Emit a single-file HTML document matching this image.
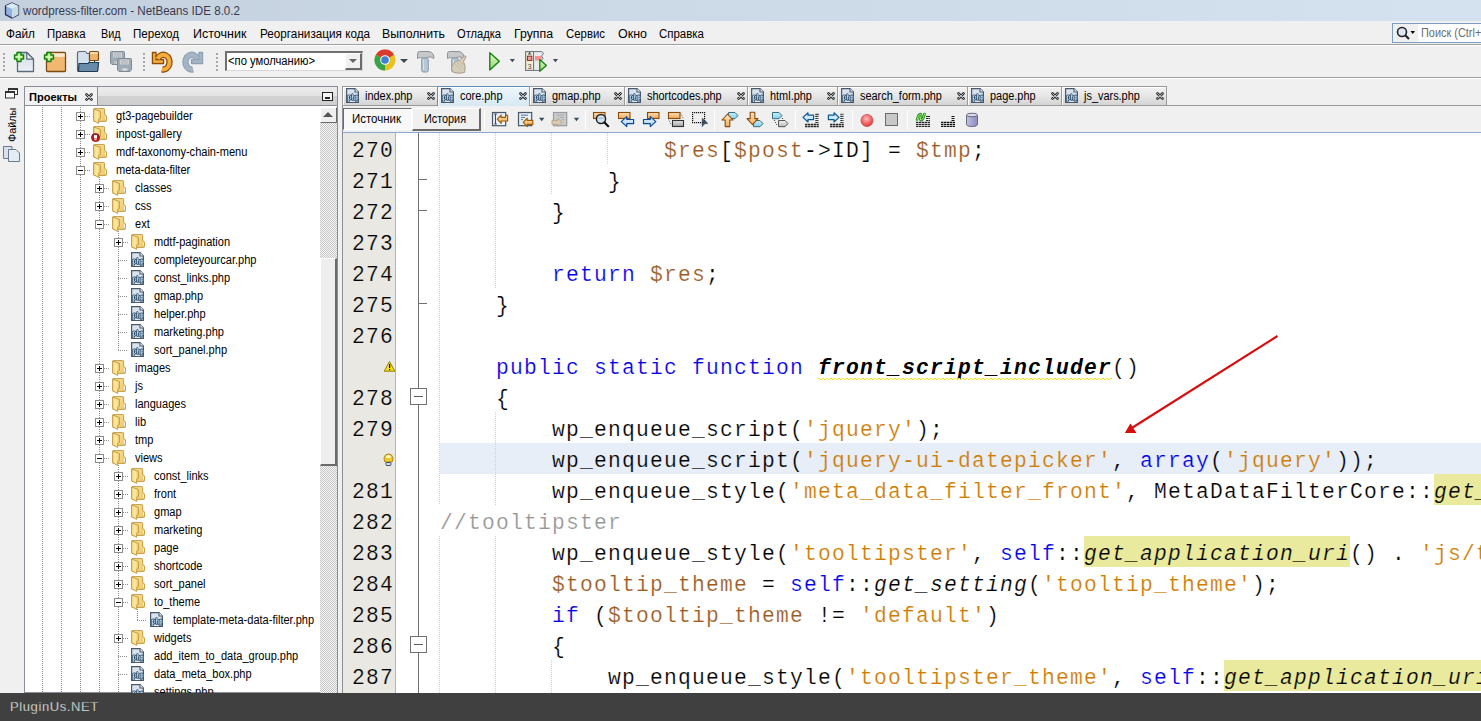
<!DOCTYPE html><html><head><meta charset="utf-8"><style>
*{margin:0;padding:0;box-sizing:border-box}
html,body{width:1481px;height:721px;overflow:hidden;background:#f0f0f0;font-family:"Liberation Sans",sans-serif;font-size:12px;color:#000;position:relative}
.a{position:absolute}
.t{position:absolute;white-space:pre;line-height:1;transform-origin:0 0}
svg{position:absolute;overflow:visible}
#title{left:0;top:0;width:1481px;height:21px;background:linear-gradient(90deg,#c4d0de 0%,#cbd8e6 40%,#d4e2f0 100%)}
.hl{position:absolute;left:0;width:1481px;height:1px}
.code{position:absolute;left:440px;font-family:"Liberation Mono",monospace;font-size:21.3px;letter-spacing:1.218px;white-space:pre;line-height:31px;height:31px;padding-top:3px;color:#000;-webkit-text-stroke:0.2px #fff}
.ln{position:absolute;left:345px;width:49px;text-align:right;font-family:"Liberation Mono",monospace;font-size:21.3px;letter-spacing:1.218px;white-space:pre;line-height:31px;height:31px;padding-top:3px;color:#000;-webkit-text-stroke:0.2px #e9e8e2}
.kw{color:#0000e6}
.var{color:#9a5a22}
.str{color:#ce7b00}
.cm{color:#969696}
.it{font-style:italic}
.bi{font-style:italic;font-weight:bold;-webkit-text-stroke-width:0}
.yel{-webkit-text-stroke-color:#eaea9e}
.hlc{-webkit-text-stroke-color:#e8eef8}
.vg{position:absolute;width:1px;background:repeating-linear-gradient(180deg,#8c8c8c 0 1px,transparent 1px 2px)}
.hg{position:absolute;height:1px;background:repeating-linear-gradient(90deg,#8c8c8c 0 1px,transparent 1px 2px)}
.ig{position:absolute;width:1px;background:repeating-linear-gradient(180deg,#d0d0d0 0 1px,transparent 1px 2px)}
.exp{position:absolute;width:9px;height:9px;border:1px solid #8c8c8c;background:#fff}
.exp:before{content:"";position:absolute;left:1px;top:3px;width:5px;height:1px;background:#000}
.exp.p:after{content:"";position:absolute;left:3px;top:1px;width:1px;height:5px;background:#000}
.tab{position:absolute;top:86px;height:19px;border:1px solid #9a9a9a;border-bottom:none;box-shadow:inset 1px 1px 0 #fff;background:linear-gradient(180deg,#f2f2f2 0%,#e6e6e6 50%,#d4d4d4 100%)}
.tab.act{height:20px;background:linear-gradient(180deg,#eef6fc 0%,#d8e8f4 100%);border-color:#5a8ec4}
.sep{position:absolute;width:1px;background:#a0a0a0;border-right:1px solid #fff}
.dsep{position:absolute;width:2px;background:repeating-linear-gradient(180deg,#a8a8a8 0 2px,transparent 2px 4px)}
.dd{position:absolute;width:0;height:0;border-left:4px solid transparent;border-right:4px solid transparent;border-top:4px solid #3a4a5a}
</style></head><body>
<svg width="0" height="0" style="position:absolute"><defs>
<symbol id="fold" viewBox="0 0 14 16"><defs><linearGradient id="gfb" x1="0" y1="0" x2="1" y2="1"><stop offset="0" stop-color="#f8e3a0"/><stop offset="1" stop-color="#eec868"/></linearGradient><linearGradient id="gff" x1="0" y1="0" x2="1" y2="0"><stop offset="0" stop-color="#f6d880"/><stop offset="0.5" stop-color="#fce9a4"/><stop offset="1" stop-color="#f0cc6c"/></linearGradient></defs><path d="M1 0.6 L10.9 0.6 Q11.6 0.6 11.6 1.3 L11.6 6.4 L12.9 7.3 Q13.6 7.9 13.6 8.8 L13.6 12.6 Q13.6 13.4 12.8 13.4 L1 13.4 Z" fill="url(#gfb)" stroke="#c49c46" stroke-width="1"/><path d="M0.6 1 L7.4 3.4 L7.4 10.4 L5.7 11.2 L5.7 15.4 L0.6 12.8 Z" fill="url(#gff)" stroke="#c49c46" stroke-width="1" stroke-linejoin="round"/><rect x="12" y="8.6" width="0.9" height="3.4" fill="#fff"/><rect x="12" y="11.6" width="0.9" height="0.9" fill="#9ac0f0"/></symbol>
<symbol id="php" viewBox="0 0 13 15"><path d="M0.6 0.6 L9 0.6 L12.4 4 L12.4 14.4 L0.6 14.4 Z" fill="#d8e3ee" stroke="#4a5a6c" stroke-width="1.2"/><path d="M9 0.6 L9 4 L12.4 4" fill="#f2f6fa" stroke="#4a5a6c" stroke-width="1.1"/><path d="M2.4 13.6 L2.4 7.8 M2.4 8.8 Q2.6 7.6 3.6 7.6 Q4.7 7.6 4.7 9.6 Q4.7 11.5 3.6 11.5 Q2.6 11.5 2.4 10.6 M6.4 6.4 L6.4 11.8 M6.4 9 Q6.6 7.8 7.4 7.8 Q8.3 7.8 8.3 9 L8.3 11.8 M10.1 13.6 L10.1 7.8 M10.1 8.8 Q10.3 7.6 11 7.6 Q11.9 7.6 11.9 9.6 Q11.9 11.5 11 11.5 Q10.3 11.5 10.1 10.6" fill="none" stroke="#2e4c68" stroke-width="2.3" stroke-linecap="round"/><path d="M2.4 13.6 L2.4 7.8 M2.4 8.8 Q2.6 7.6 3.6 7.6 Q4.7 7.6 4.7 9.6 Q4.7 11.5 3.6 11.5 Q2.6 11.5 2.4 10.6 M6.4 6.4 L6.4 11.8 M6.4 9 Q6.6 7.8 7.4 7.8 Q8.3 7.8 8.3 9 L8.3 11.8 M10.1 13.6 L10.1 7.8 M10.1 8.8 Q10.3 7.6 11 7.6 Q11.9 7.6 11.9 9.6 Q11.9 11.5 11 11.5 Q10.3 11.5 10.1 10.6" fill="none" stroke="#c8e4fa" stroke-width="0.8" stroke-linecap="round"/><path d="M4 13.5 L9 13.5" stroke="#f4f8fc" stroke-width="0.7"/></symbol>
</defs></svg>
<div class="a" id="title"></div>
<svg style="left:4px;top:2px" width="16" height="17" viewBox="0 0 16 17"><path d="M8 1 L14.5 4 L14.5 12.5 L8 16 L1.5 12.5 L1.5 4 Z" fill="#8fb0e0" stroke="#2a2a5a" stroke-width="1.3"/><path d="M1.5 4 L8 7 L14.5 4 L8 1 Z" fill="#d8ecf0"/><path d="M8 7 L14.5 4 L14.5 12.5 L8 16Z" fill="#c8dce0"/></svg>
<div class="t" style="left:23px;top:4px;font-size:13px;color:#3a3a4e;transform:scaleX(0.894)">wordpress-filter.com - NetBeans IDE 8.0.2</div>
<div class="t" style="transform:scaleX(0.9436);left:6px;top:28px;font-size:12.5px">Файл</div>
<div class="t" style="transform:scaleX(0.9116);left:47px;top:28px;font-size:12.5px">Правка</div>
<div class="t" style="transform:scaleX(0.8619);left:100.5px;top:28px;font-size:12.5px">Вид</div>
<div class="t" style="transform:scaleX(0.9264);left:133px;top:28px;font-size:12.5px">Переход</div>
<div class="t" style="transform:scaleX(1.0023);left:192.5px;top:28px;font-size:12.5px">Источник</div>
<div class="t" style="transform:scaleX(0.9372);left:259.5px;top:28px;font-size:12.5px">Реорганизация кода</div>
<div class="t" style="transform:scaleX(0.9815);left:382px;top:28px;font-size:12.5px">Выполнить</div>
<div class="t" style="transform:scaleX(0.8903);left:457px;top:28px;font-size:12.5px">Отладка</div>
<div class="t" style="transform:scaleX(0.9842);left:514px;top:28px;font-size:12.5px">Группа</div>
<div class="t" style="transform:scaleX(0.9109);left:566px;top:28px;font-size:12.5px">Сервис</div>
<div class="t" style="transform:scaleX(0.9984);left:618px;top:28px;font-size:12.5px">Окно</div>
<div class="t" style="transform:scaleX(0.9175);left:659px;top:28px;font-size:12.5px">Справка</div>
<div class="hl" style="top:44px;background:#a0a0a0"></div><div class="hl" style="top:45px;background:#fff"></div>
<div class="hl" style="top:77px;background:#a0a0a0"></div><div class="hl" style="top:78px;background:#fff"></div>
<div class="a" style="left:1392px;top:23px;width:95px;height:20px;border:1px solid #7b9ec2;background:#fff"></div>
<div class="a" style="left:1393px;top:24px;width:25px;height:18px;background:#f0f0f0"></div>
<svg style="left:1396px;top:26px" width="20" height="16"><circle cx="6" cy="6" r="4.5" fill="#dbe8f4" stroke="#222" stroke-width="1.6"/><path d="M9 9 L13 13" stroke="#222" stroke-width="2.2"/><path d="M14.5 5 L19 5 L16.75 8 Z" fill="#000"/></svg>
<div class="t" style="left:1421px;top:27px;font-size:12px;color:#6d6d6d;transform:scaleX(0.91)">Поиск (Ctrl+I)</div>
<div class="dsep" style="left:3px;top:53px;height:20px"></div>
<div class="dsep" style="left:143px;top:53px;height:20px"></div>
<div class="dsep" style="left:216px;top:53px;height:20px"></div>
<svg style="left:10px;top:48px" width="26" height="26"><defs><linearGradient id="gpg" x1="0" y1="0" x2="0" y2="1"><stop offset="0" stop-color="#cfd9e6"/><stop offset="1" stop-color="#eef2f8"/></linearGradient></defs><path d="M7.5 4.5 L16.8 4.5 L23.5 11.2 L23.5 23.5 L7.5 23.5 Z" fill="url(#gpg)" stroke="#5c6a7a" stroke-width="1.3" stroke-linejoin="round"/><path d="M16.8 4.5 L16.8 11.2 L23.5 11.2Z" fill="#e6ecf4" stroke="#5c6a7a" stroke-width="1.2" stroke-linejoin="round"/><path d="M7 4.5 L11 4.5 L11 7 L13.5 7 L13.5 11 L11 11 L11 13.5 L7 13.5 L7 11 L4.5 11 L4.5 7 L7 7 Z" fill="#a8ee78" stroke="#168010" stroke-width="1.4" stroke-linejoin="round"/><path d="M8.5 6 L9.5 6 L9.5 12 L8.5 12Z M6 8.5 L12 8.5 L12 9.5 L6 9.5Z" fill="#e4ffd0"/></svg>
<svg style="left:40px;top:48px" width="26" height="26"><rect x="6.5" y="4.5" width="19" height="19" rx="1" fill="#f0b870" stroke="#7a4a12" stroke-width="1.3"/><rect x="7.3" y="5.3" width="17.4" height="3.6" fill="#fbe8cc"/><path d="M7 4.5 L11 4.5 L11 7 L13.5 7 L13.5 11 L11 11 L11 13.5 L7 13.5 L7 11 L4.5 11 L4.5 7 L7 7 Z" fill="#a8ee78" stroke="#168010" stroke-width="1.4" stroke-linejoin="round"/><path d="M8.5 6 L9.5 6 L9.5 12 L8.5 12Z M6 8.5 L12 8.5 L12 9.5 L6 9.5Z" fill="#e4ffd0"/></svg>
<svg style="left:72px;top:48px" width="28" height="26"><path d="M5.5 5.5 Q5.5 3.5 7.5 3.5 L13 3.5 Q14.5 3.5 14.8 5.5 L17.5 5.5 L17.5 22.5 Q17.5 23.5 16.5 23.5 L6.5 23.5 Q5.5 23.5 5.5 22.5Z" fill="#d4e0ec" stroke="#5c6a7a" stroke-width="1.2"/><rect x="17.5" y="3.5" width="9" height="9" rx="1" fill="#eeb268" stroke="#7a4a12" stroke-width="1.2"/><rect x="18.2" y="4.2" width="7.6" height="1.8" fill="#fbe2c0"/><path d="M22.5 12.5 L22.5 14.5" stroke="#333"/><path d="M7 15.5 L16 15.5 L17 14.5 L26.5 14.5 L25.8 22.5 Q25.7 23.5 24.7 23.5 L7 23.5 Q6.5 23.5 6.5 22.5Z" fill="#6a8cac" stroke="#243a50" stroke-width="1.2"/></svg>
<svg style="left:106px;top:48px" width="28" height="26"><path d="M4.5 4.5 Q4.5 3.5 5.5 3.5 L17.5 3.5 Q18.5 3.5 18.5 4.5 L18.5 14.5 L17 16.5 L6 16.5 L4.5 15Z" fill="#9eaab6" stroke="#7e8a96" stroke-width="1"/><rect x="7" y="4.5" width="9" height="5" fill="#cdd0d4"/><path d="M8 6 L15 6 M8 8 L15 8" stroke="#a8abb0" stroke-width="0.8"/><rect x="8" y="13" width="7" height="3" fill="#b8bcc0"/><rect x="10" y="13.5" width="3.5" height="2" fill="#e0e0e0"/><path d="M11.5 11.5 Q11.5 10.5 12.5 10.5 L24.5 10.5 Q25.5 10.5 25.5 11.5 L25.5 21.5 L24 23.5 L13 23.5 L11.5 22Z" fill="#9eaab6" stroke="#7e8a96" stroke-width="1"/><rect x="14" y="11.5" width="9" height="5" fill="#cdd0d4"/><path d="M15 13 L22 13 M15 15 L22 15" stroke="#a8abb0" stroke-width="0.8"/><rect x="15" y="20" width="7" height="3" fill="#b8bcc0"/><rect x="17" y="20.5" width="3.5" height="2" fill="#e0e0e0"/></svg>
<svg style="left:148px;top:48px" width="26" height="26"><path d="M9.6 10.9 A6.3 7.3 0 1 1 14 21.3" fill="none" stroke="#8a4a08" stroke-width="6.4"/><path d="M4.5 4.5 L8 4.5 L8 11.8 L15.5 11.8 L15.5 15.5 L4.5 15.5 Z" fill="#f2a838" stroke="#8a4a08" stroke-width="1.4" stroke-linejoin="round"/><path d="M9.6 10.9 A6.3 7.3 0 1 1 14 21.3" fill="none" stroke="#f4ac3c" stroke-width="4"/><path d="M5.3 5.2 L7.3 5.2 L7.3 12.5 L14.8 12.5 L14.8 14.8 L5.3 14.8Z" fill="#f2a838"/></svg>
<svg style="left:181px;top:48px" width="26" height="26"><g transform="translate(26,0) scale(-1,1)"><path d="M9.6 10.9 A6.3 7.3 0 1 1 14 21.3" fill="none" stroke="#8ea0b2" stroke-width="6.4"/><path d="M4.5 4.5 L8 4.5 L8 11.8 L15.5 11.8 L15.5 15.5 L4.5 15.5 Z" fill="#a4b6c6" stroke="#8ea0b2" stroke-width="1.4" stroke-linejoin="round"/><path d="M9.6 10.9 A6.3 7.3 0 1 1 14 21.3" fill="none" stroke="#a4b6c6" stroke-width="4"/><path d="M5.3 5.2 L7.3 5.2 L7.3 12.5 L14.8 12.5 L14.8 14.8 L5.3 14.8Z" fill="#a4b6c6"/></g></svg>
<div class="a" style="left:225px;top:51px;width:138px;height:20px;border:2px solid #707070;border-right:1px solid #d8d8d8;border-bottom:1px solid #d8d8d8;background:#fff"></div>
<div class="a" style="left:345px;top:53px;width:17px;height:17px;background:#f0f0f0;border-left:1px solid #fff;border-top:1px solid #fff;border-right:2px solid #6a6a6a;border-bottom:2px solid #6a6a6a"></div>
<div class="dd" style="left:349px;top:59px;border-top-color:#666"></div>
<div class="t" style="transform:scaleX(0.9350);left:228px;top:55px;font-size:12px">&lt;по умолчанию&gt;</div>
<svg style="left:374px;top:49px" width="22" height="22" viewBox="0 0 22 22"><circle cx="11" cy="11" r="10.5" fill="#e8c220"/><path d="M11 11 L11 0.5 A10.5 10.5 0 0 0 1.9 5.75 Z" fill="#d93a2e"/><path d="M11 0.5 A10.5 10.5 0 0 1 20.1 5.75 L11 11Z" fill="#d93a2e"/><path d="M1.9 5.75 A10.5 10.5 0 0 0 11 21.5 L11 11Z" fill="#3aa34a"/><circle cx="11" cy="11" r="4.8" fill="#fff"/><circle cx="11" cy="11" r="3.8" fill="#3f7fd6"/></svg>
<div class="dd" style="left:400px;top:59px"></div>
<svg style="left:414px;top:48px" width="60" height="26"><path d="M3.5 5.5 Q3.5 3.5 5.5 3.5 L14 3.5 Q18.5 3.5 19.8 8 L19.8 10.5 Q17.5 8.6 14.5 9 L11 10 L8 10 Q5.5 8.8 3.5 10.5 Z" fill="#c6c8ca" stroke="#8e9296" stroke-width="1"/><rect x="7.7" y="10" width="6.6" height="14" rx="1.6" fill="#b6c6d4" stroke="#8a9aaa" stroke-width="1"/><path d="M9.5 12 L9.5 22" stroke="#d4e0ea" stroke-width="1"/><path d="M33.5 5.5 Q33.5 3.5 35.5 3.5 L44 3.5 Q48.5 3.5 49.8 8 L49.8 10.5 Q47.5 8.6 44.5 9 L41 10 L38 10 Q35.5 8.8 33.5 10.5 Z" fill="#c6c8ca" stroke="#8e9296" stroke-width="1"/><rect x="37.7" y="10" width="6.6" height="14" rx="1.6" fill="#b6c6d4" stroke="#8a9aaa" stroke-width="1"/><path d="M39.5 12 L39.5 22" stroke="#d4e0ea" stroke-width="1"/><path d="M37.5 19 Q40 13 45 12.5 L50.5 8 Q52 7.5 52 9 L49.5 13.5 Q52.5 18 50.5 24.5 Q45 26 40 24.5 Q37 22.5 37.5 19Z" fill="#d6ccba" stroke="#a89e8c" stroke-width="1"/><path d="M41 16 L47 22 M43 14.5 L49 20 M45.5 13.5 L50 17" stroke="#c0b4a0" stroke-width="0.7"/></svg>
<svg style="left:480px;top:46px" width="90" height="30"><defs><linearGradient id="ggn" x1="0" y1="0" x2="0" y2="1"><stop offset="0" stop-color="#e0f8c8"/><stop offset="1" stop-color="#98d474"/></linearGradient></defs><path d="M9.8 6.8 L19.3 15.3 L9.8 23.9 Z" fill="url(#ggn)" stroke="#128210" stroke-width="1.4" stroke-linejoin="round"/><path d="M29.8 13 L34.9 13 L32.35 16.2 Z" fill="#3a4a5a"/><rect x="45.6" y="5.6" width="8" height="18.8" fill="#f4ecd0" stroke="#6a7480" stroke-width="1.1"/><path d="M53.6 5.6 L61.8 5.6 L63.6 7.2 L61.6 10 L63 12.5 L61 15 L62.4 17.5 L60.4 20 L61.6 22.2 L60 24.4 L53.6 24.4 Z" fill="#e8eaee" stroke="#6a7480" stroke-width="1"/><path d="M49.6 6 L49.6 8 M48 8 L51.2 8" stroke="#3a4a5a" stroke-width="1"/><rect x="47.4" y="10.2" width="4.4" height="4.2" fill="#f0a0a0" stroke="#8a2a2a" stroke-width="1"/><text x="49.6" y="22.5" font-size="6.8" font-family="Liberation Sans" fill="#3a4a5a" text-anchor="middle">3</text><rect x="55" y="10" width="6.5" height="4.6" fill="#f89090"/><path d="M59.8 13.6 L66.4 19.4 L59.8 25.2 Z" fill="url(#ggn)" stroke="#128210" stroke-width="1.3" stroke-linejoin="round"/><path d="M72.9 13 L78 13 L75.45 16.2 Z" fill="#3a4a5a"/></svg>
<svg style="left:5px;top:88px" width="13" height="11"><rect x="3.5" y="0.5" width="9" height="6" fill="#f4f4f4" stroke="#333"/><rect x="3.5" y="0.5" width="9" height="1.5" fill="#333"/><rect x="0.5" y="3.5" width="9" height="6.5" fill="#f8f8f8" stroke="#333"/><rect x="0.5" y="3.5" width="9" height="1.5" fill="#333"/></svg>
<div class="t" style="left:6.5px;top:142px;font-size:11px;transform:rotate(-90deg) scaleX(0.98);transform-origin:0 0">Файлы</div>
<svg style="left:3px;top:146px" width="17" height="16"><path d="M0.5 0.5 L9 0.5 L9 12.5 L0.5 12.5Z" fill="#d8e2ec" stroke="#6a7a8a"/><path d="M5.5 3.5 L13 3.5 L16.5 7 L16.5 15.5 L5.5 15.5Z" fill="#e4ecf4" stroke="#6a7a8a"/></svg>
<div class="a" style="left:24px;top:86px;width:314px;height:607px;border:1px solid #8a8e96;background:#fff"></div>
<div class="a" style="left:25px;top:87px;width:312px;height:19px;background:linear-gradient(180deg,#ececec 0%,#e4e4e4 50%,#d2d2d2 51%,#cecece 100%);border-bottom:1px solid #8a8e96"></div>
<div class="a" style="left:25px;top:87px;width:73px;height:19px;background:#f2f2f2;border-right:1px solid #8a8e96;border-bottom:1px solid #8a8e96"></div>
<div class="t" style="transform:scaleX(0.9615);left:29px;top:92px;font-size:11.5px;font-weight:bold">Проекты</div>
<svg style="left:85px;top:93px" width="8" height="8"><path d="M1.5 1.5 L6.5 6.5 M6.5 1.5 L1.5 6.5" stroke="#2e3236" stroke-width="2.7" stroke-linecap="round"/><path d="M1.5 1.5 L6.5 6.5 M6.5 1.5 L1.5 6.5" stroke="#dfe4e8" stroke-width="0.8" stroke-linecap="round"/></svg>
<div class="a" style="left:322px;top:92px;width:11px;height:9px;border:1px solid #222;background:#f4f4f4"></div><div class="a" style="left:325px;top:97px;width:5px;height:2px;background:#222"></div>
<div class="a" style="left:320px;top:107px;width:17px;height:586px;background-color:#f4f4f4;background-image:repeating-conic-gradient(#c4c4c4 0 25%,#f8f8f8 0 50%);background-size:2px 2px"></div>
<div class="a" style="left:320px;top:107px;width:17px;height:16px;background:#f0f0f0;border-right:1px solid #6a6a6a;border-bottom:1px solid #6a6a6a;border-left:1px solid #fff;border-top:1px solid #fff"></div>
<div class="a" style="left:323px;top:112px;width:0;height:0;border-left:5px solid transparent;border-right:5px solid transparent;border-bottom:5px solid #555"></div>
<div class="a" style="left:320px;top:258px;width:17px;height:208px;background:#eeeeee;border-right:2px solid #6a6a6a;border-bottom:2px solid #6a6a6a;border-left:1px solid #fff;border-top:1px solid #fff"></div>
<div class="a" style="left:25px;top:107px;width:295px;height:586px;overflow:hidden">
<div class="vg" style="left:17px;top:0px;height:586px"></div>
<div class="vg" style="left:36px;top:0px;height:586px"></div>
<div class="vg" style="left:55px;top:0px;height:586px"></div>
<div class="vg" style="left:74px;top:68px;height:518px"></div>
<div class="vg" style="left:93px;top:122px;height:122px"></div>
<div class="vg" style="left:93px;top:356px;height:230px"></div>
<div class="vg" style="left:112px;top:500px;height:14px"></div>
<div class="exp p" style="left:51px;top:5px"></div>
<div class="hg" style="left:60px;top:9px;width:5px"></div>
<svg style="left:68px;top:1px" width="14" height="16"><use href="#fold"/></svg>
<div class="t" style="left:90.5px;top:3px;font-size:12px;transform:scaleX(0.92)">gt3-pagebuilder</div>
<div class="exp p" style="left:51px;top:23px"></div>
<div class="hg" style="left:60px;top:27px;width:5px"></div>
<svg style="left:68px;top:19px" width="14" height="16"><use href="#fold"/></svg>
<div class="t" style="left:90.5px;top:21px;font-size:12px;transform:scaleX(0.92)">inpost-gallery</div>
<div class="exp p" style="left:51px;top:41px"></div>
<div class="hg" style="left:60px;top:45px;width:5px"></div>
<svg style="left:68px;top:37px" width="14" height="16"><use href="#fold"/></svg>
<div class="t" style="left:90.5px;top:39px;font-size:12px;transform:scaleX(0.92)">mdf-taxonomy-chain-menu</div>
<div class="exp " style="left:51px;top:59px"></div>
<div class="hg" style="left:60px;top:63px;width:5px"></div>
<svg style="left:68px;top:55px" width="14" height="16"><use href="#fold"/></svg>
<div class="t" style="left:90.5px;top:57px;font-size:12px;transform:scaleX(0.92)">meta-data-filter</div>
<div class="exp p" style="left:70px;top:77px"></div>
<div class="hg" style="left:79px;top:81px;width:5px"></div>
<svg style="left:87px;top:73px" width="14" height="16"><use href="#fold"/></svg>
<div class="t" style="left:109.5px;top:75px;font-size:12px;transform:scaleX(0.92)">classes</div>
<div class="exp p" style="left:70px;top:95px"></div>
<div class="hg" style="left:79px;top:99px;width:5px"></div>
<svg style="left:87px;top:91px" width="14" height="16"><use href="#fold"/></svg>
<div class="t" style="left:109.5px;top:93px;font-size:12px;transform:scaleX(0.92)">css</div>
<div class="exp " style="left:70px;top:113px"></div>
<div class="hg" style="left:79px;top:117px;width:5px"></div>
<svg style="left:87px;top:109px" width="14" height="16"><use href="#fold"/></svg>
<div class="t" style="left:109.5px;top:111px;font-size:12px;transform:scaleX(0.92)">ext</div>
<div class="exp p" style="left:89px;top:131px"></div>
<div class="hg" style="left:98px;top:135px;width:5px"></div>
<svg style="left:106px;top:127px" width="14" height="16"><use href="#fold"/></svg>
<div class="t" style="left:128.5px;top:129px;font-size:12px;transform:scaleX(0.92)">mdtf-pagination</div>
<div class="hg" style="left:93px;top:153px;width:10px"></div>
<svg style="left:106px;top:145px" width="13" height="15"><use href="#php"/></svg>
<div class="t" style="left:128.5px;top:147px;font-size:12px;transform:scaleX(0.92)">completeyourcar.php</div>
<div class="hg" style="left:93px;top:171px;width:10px"></div>
<svg style="left:106px;top:163px" width="13" height="15"><use href="#php"/></svg>
<div class="t" style="left:128.5px;top:165px;font-size:12px;transform:scaleX(0.92)">const_links.php</div>
<div class="hg" style="left:93px;top:189px;width:10px"></div>
<svg style="left:106px;top:181px" width="13" height="15"><use href="#php"/></svg>
<div class="t" style="left:128.5px;top:183px;font-size:12px;transform:scaleX(0.92)">gmap.php</div>
<div class="hg" style="left:93px;top:207px;width:10px"></div>
<svg style="left:106px;top:199px" width="13" height="15"><use href="#php"/></svg>
<div class="t" style="left:128.5px;top:201px;font-size:12px;transform:scaleX(0.92)">helper.php</div>
<div class="hg" style="left:93px;top:225px;width:10px"></div>
<svg style="left:106px;top:217px" width="13" height="15"><use href="#php"/></svg>
<div class="t" style="left:128.5px;top:219px;font-size:12px;transform:scaleX(0.92)">marketing.php</div>
<div class="hg" style="left:93px;top:243px;width:10px"></div>
<svg style="left:106px;top:235px" width="13" height="15"><use href="#php"/></svg>
<div class="t" style="left:128.5px;top:237px;font-size:12px;transform:scaleX(0.92)">sort_panel.php</div>
<div class="exp p" style="left:70px;top:257px"></div>
<div class="hg" style="left:79px;top:261px;width:5px"></div>
<svg style="left:87px;top:253px" width="14" height="16"><use href="#fold"/></svg>
<div class="t" style="left:109.5px;top:255px;font-size:12px;transform:scaleX(0.92)">images</div>
<div class="exp p" style="left:70px;top:275px"></div>
<div class="hg" style="left:79px;top:279px;width:5px"></div>
<svg style="left:87px;top:271px" width="14" height="16"><use href="#fold"/></svg>
<div class="t" style="left:109.5px;top:273px;font-size:12px;transform:scaleX(0.92)">js</div>
<div class="exp p" style="left:70px;top:293px"></div>
<div class="hg" style="left:79px;top:297px;width:5px"></div>
<svg style="left:87px;top:289px" width="14" height="16"><use href="#fold"/></svg>
<div class="t" style="left:109.5px;top:291px;font-size:12px;transform:scaleX(0.92)">languages</div>
<div class="exp p" style="left:70px;top:311px"></div>
<div class="hg" style="left:79px;top:315px;width:5px"></div>
<svg style="left:87px;top:307px" width="14" height="16"><use href="#fold"/></svg>
<div class="t" style="left:109.5px;top:309px;font-size:12px;transform:scaleX(0.92)">lib</div>
<div class="exp p" style="left:70px;top:329px"></div>
<div class="hg" style="left:79px;top:333px;width:5px"></div>
<svg style="left:87px;top:325px" width="14" height="16"><use href="#fold"/></svg>
<div class="t" style="left:109.5px;top:327px;font-size:12px;transform:scaleX(0.92)">tmp</div>
<div class="exp " style="left:70px;top:347px"></div>
<div class="hg" style="left:79px;top:351px;width:5px"></div>
<svg style="left:87px;top:343px" width="14" height="16"><use href="#fold"/></svg>
<div class="t" style="left:109.5px;top:345px;font-size:12px;transform:scaleX(0.92)">views</div>
<div class="exp p" style="left:89px;top:365px"></div>
<div class="hg" style="left:98px;top:369px;width:5px"></div>
<svg style="left:106px;top:361px" width="14" height="16"><use href="#fold"/></svg>
<div class="t" style="left:128.5px;top:363px;font-size:12px;transform:scaleX(0.92)">const_links</div>
<div class="exp p" style="left:89px;top:383px"></div>
<div class="hg" style="left:98px;top:387px;width:5px"></div>
<svg style="left:106px;top:379px" width="14" height="16"><use href="#fold"/></svg>
<div class="t" style="left:128.5px;top:381px;font-size:12px;transform:scaleX(0.92)">front</div>
<div class="exp p" style="left:89px;top:401px"></div>
<div class="hg" style="left:98px;top:405px;width:5px"></div>
<svg style="left:106px;top:397px" width="14" height="16"><use href="#fold"/></svg>
<div class="t" style="left:128.5px;top:399px;font-size:12px;transform:scaleX(0.92)">gmap</div>
<div class="exp p" style="left:89px;top:419px"></div>
<div class="hg" style="left:98px;top:423px;width:5px"></div>
<svg style="left:106px;top:415px" width="14" height="16"><use href="#fold"/></svg>
<div class="t" style="left:128.5px;top:417px;font-size:12px;transform:scaleX(0.92)">marketing</div>
<div class="exp p" style="left:89px;top:437px"></div>
<div class="hg" style="left:98px;top:441px;width:5px"></div>
<svg style="left:106px;top:433px" width="14" height="16"><use href="#fold"/></svg>
<div class="t" style="left:128.5px;top:435px;font-size:12px;transform:scaleX(0.92)">page</div>
<div class="exp p" style="left:89px;top:455px"></div>
<div class="hg" style="left:98px;top:459px;width:5px"></div>
<svg style="left:106px;top:451px" width="14" height="16"><use href="#fold"/></svg>
<div class="t" style="left:128.5px;top:453px;font-size:12px;transform:scaleX(0.92)">shortcode</div>
<div class="exp p" style="left:89px;top:473px"></div>
<div class="hg" style="left:98px;top:477px;width:5px"></div>
<svg style="left:106px;top:469px" width="14" height="16"><use href="#fold"/></svg>
<div class="t" style="left:128.5px;top:471px;font-size:12px;transform:scaleX(0.92)">sort_panel</div>
<div class="exp " style="left:89px;top:491px"></div>
<div class="hg" style="left:98px;top:495px;width:5px"></div>
<svg style="left:106px;top:487px" width="14" height="16"><use href="#fold"/></svg>
<div class="t" style="left:128.5px;top:489px;font-size:12px;transform:scaleX(0.92)">to_theme</div>
<div class="hg" style="left:112px;top:513px;width:10px"></div>
<svg style="left:125px;top:505px" width="13" height="15"><use href="#php"/></svg>
<div class="t" style="left:147.5px;top:507px;font-size:12px;transform:scaleX(0.92)">template-meta-data-filter.php</div>
<div class="exp p" style="left:89px;top:527px"></div>
<div class="hg" style="left:98px;top:531px;width:5px"></div>
<svg style="left:106px;top:523px" width="14" height="16"><use href="#fold"/></svg>
<div class="t" style="left:128.5px;top:525px;font-size:12px;transform:scaleX(0.92)">widgets</div>
<div class="hg" style="left:93px;top:549px;width:10px"></div>
<svg style="left:106px;top:541px" width="13" height="15"><use href="#php"/></svg>
<div class="t" style="left:128.5px;top:543px;font-size:12px;transform:scaleX(0.92)">add_item_to_data_group.php</div>
<div class="hg" style="left:93px;top:567px;width:10px"></div>
<svg style="left:106px;top:559px" width="13" height="15"><use href="#php"/></svg>
<div class="t" style="left:128.5px;top:561px;font-size:12px;transform:scaleX(0.92)">data_meta_box.php</div>
<div class="hg" style="left:93px;top:585px;width:10px"></div>
<svg style="left:106px;top:577px" width="13" height="15"><use href="#php"/></svg>
<div class="t" style="left:128.5px;top:579px;font-size:12px;transform:scaleX(0.92)">settings.php</div>
</div>
<svg style="left:91px;top:133px" width="9" height="9"><circle cx="4.5" cy="4.5" r="4" fill="#c8141e" stroke="#8a0a10" stroke-width="0.8"/><rect x="3" y="2" width="3" height="3.5" fill="#fff"/><rect x="3.5" y="6" width="2" height="1.2" fill="#fff"/></svg>
<div class="a" style="left:342px;top:106px;width:1139px;height:587px;border-left:1px solid #8a8e96;background:#f0f0f0"></div>
<div class="hl" style="top:105px;left:342px;width:1139px;background:#9a9a9a"></div>
<div class="tab" style="left:342px;width:96px"></div>
<svg style="left:346px;top:88px" width="13" height="15"><use href="#php"/></svg>
<div class="t" style="left:365px;top:90px;font-size:12px;transform:scaleX(0.91)">index.php</div>
<svg style="left:427px;top:92px" width="8" height="8"><path d="M1.5 1.5 L6.5 6.5 M6.5 1.5 L1.5 6.5" stroke="#2e3236" stroke-width="2.7" stroke-linecap="round"/><path d="M1.5 1.5 L6.5 6.5 M6.5 1.5 L1.5 6.5" stroke="#dfe4e8" stroke-width="0.8" stroke-linecap="round"/></svg>
<div class="tab act" style="left:437px;width:93px"></div>
<svg style="left:441px;top:88px" width="13" height="15"><use href="#php"/></svg>
<div class="t" style="left:460px;top:90px;font-size:12px;transform:scaleX(0.91)">core.php</div>
<svg style="left:519px;top:92px" width="8" height="8"><path d="M1.5 1.5 L6.5 6.5 M6.5 1.5 L1.5 6.5" stroke="#2e3236" stroke-width="2.7" stroke-linecap="round"/><path d="M1.5 1.5 L6.5 6.5 M6.5 1.5 L1.5 6.5" stroke="#dfe4e8" stroke-width="0.8" stroke-linecap="round"/></svg>
<div class="tab" style="left:529px;width:96px"></div>
<svg style="left:533px;top:88px" width="13" height="15"><use href="#php"/></svg>
<div class="t" style="left:552px;top:90px;font-size:12px;transform:scaleX(0.91)">gmap.php</div>
<svg style="left:614px;top:92px" width="8" height="8"><path d="M1.5 1.5 L6.5 6.5 M6.5 1.5 L1.5 6.5" stroke="#2e3236" stroke-width="2.7" stroke-linecap="round"/><path d="M1.5 1.5 L6.5 6.5 M6.5 1.5 L1.5 6.5" stroke="#dfe4e8" stroke-width="0.8" stroke-linecap="round"/></svg>
<div class="tab" style="left:624px;width:124px"></div>
<svg style="left:628px;top:88px" width="13" height="15"><use href="#php"/></svg>
<div class="t" style="left:647px;top:90px;font-size:12px;transform:scaleX(0.91)">shortcodes.php</div>
<svg style="left:737px;top:92px" width="8" height="8"><path d="M1.5 1.5 L6.5 6.5 M6.5 1.5 L1.5 6.5" stroke="#2e3236" stroke-width="2.7" stroke-linecap="round"/><path d="M1.5 1.5 L6.5 6.5 M6.5 1.5 L1.5 6.5" stroke="#dfe4e8" stroke-width="0.8" stroke-linecap="round"/></svg>
<div class="tab" style="left:747px;width:91px"></div>
<svg style="left:751px;top:88px" width="13" height="15"><use href="#php"/></svg>
<div class="t" style="left:770px;top:90px;font-size:12px;transform:scaleX(0.91)">html.php</div>
<svg style="left:827px;top:92px" width="8" height="8"><path d="M1.5 1.5 L6.5 6.5 M6.5 1.5 L1.5 6.5" stroke="#2e3236" stroke-width="2.7" stroke-linecap="round"/><path d="M1.5 1.5 L6.5 6.5 M6.5 1.5 L1.5 6.5" stroke="#dfe4e8" stroke-width="0.8" stroke-linecap="round"/></svg>
<div class="tab" style="left:837px;width:131px"></div>
<svg style="left:841px;top:88px" width="13" height="15"><use href="#php"/></svg>
<div class="t" style="left:860px;top:90px;font-size:12px;transform:scaleX(0.91)">search_form.php</div>
<svg style="left:957px;top:92px" width="8" height="8"><path d="M1.5 1.5 L6.5 6.5 M6.5 1.5 L1.5 6.5" stroke="#2e3236" stroke-width="2.7" stroke-linecap="round"/><path d="M1.5 1.5 L6.5 6.5 M6.5 1.5 L1.5 6.5" stroke="#dfe4e8" stroke-width="0.8" stroke-linecap="round"/></svg>
<div class="tab" style="left:967px;width:95px"></div>
<svg style="left:971px;top:88px" width="13" height="15"><use href="#php"/></svg>
<div class="t" style="left:990px;top:90px;font-size:12px;transform:scaleX(0.91)">page.php</div>
<svg style="left:1051px;top:92px" width="8" height="8"><path d="M1.5 1.5 L6.5 6.5 M6.5 1.5 L1.5 6.5" stroke="#2e3236" stroke-width="2.7" stroke-linecap="round"/><path d="M1.5 1.5 L6.5 6.5 M6.5 1.5 L1.5 6.5" stroke="#dfe4e8" stroke-width="0.8" stroke-linecap="round"/></svg>
<div class="tab" style="left:1061px;width:106px"></div>
<svg style="left:1065px;top:88px" width="13" height="15"><use href="#php"/></svg>
<div class="t" style="left:1084px;top:90px;font-size:12px;transform:scaleX(0.91)">js_vars.php</div>
<svg style="left:1156px;top:92px" width="8" height="8"><path d="M1.5 1.5 L6.5 6.5 M6.5 1.5 L1.5 6.5" stroke="#2e3236" stroke-width="2.7" stroke-linecap="round"/><path d="M1.5 1.5 L6.5 6.5 M6.5 1.5 L1.5 6.5" stroke="#dfe4e8" stroke-width="0.8" stroke-linecap="round"/></svg>
<div class="a" style="left:343px;top:107px;width:1138px;height:25px;background:#f0f0f0"></div>
<div class="a" style="left:343px;top:108px;width:69px;height:22px;background:#f8f8f8;border:1px solid #6a6a6a;border-right-color:#fff;border-bottom-color:#fff"></div>
<div class="t" style="transform:scaleX(0.9564);left:352px;top:113px;font-size:12px">Источник</div>
<div class="a" style="left:412px;top:108px;width:69px;height:23px;background:#f0f0f0;border:1px solid #fff;border-right:2px solid #6a6a6a;border-bottom:2px solid #6a6a6a"></div>
<div class="t" style="transform:scaleX(0.9023);left:424px;top:113px;font-size:12px">История</div>
<div class="hl" style="top:132px;left:343px;width:1138px;background:#8aaad0"></div>
<div class="sep" style="left:484px;top:110px;height:20px"></div>
<div class="sep" style="left:585px;top:110px;height:20px"></div>
<div class="sep" style="left:714px;top:110px;height:20px"></div>
<div class="sep" style="left:795px;top:110px;height:20px"></div>
<div class="sep" style="left:852px;top:110px;height:20px"></div>
<div class="sep" style="left:907px;top:110px;height:20px"></div>
<svg style="left:486px;top:106px" width="100" height="26"><defs><linearGradient id="gar" x1="0" y1="0" x2="0" y2="1"><stop offset="0" stop-color="#fde0b0"/><stop offset="1" stop-color="#f0a848"/></linearGradient><linearGradient id="gpb" x1="0" y1="0" x2="1" y2="1"><stop offset="0" stop-color="#d6e6f6"/><stop offset="1" stop-color="#f4f8fc"/></linearGradient></defs><rect x="6.5" y="6.5" width="13.2" height="13.2" fill="url(#gpb)" stroke="#4a5868" stroke-width="1.2"/><path d="M9.5 8 L9.5 18 M8.2 8 L10.8 8 M8.2 18 L10.8 18" stroke="#2a3a4a" stroke-width="0.9"/><path d="M11.3 13.2 L15.2 9.2 L15.2 11.4 L19.5 11.4 L19.5 9.4 L21.6 9.4 L21.6 15 L15.2 15 L15.2 17.4 Z" fill="url(#gar)" stroke="#9a5808" stroke-width="1.1" stroke-linejoin="round"/><rect x="32.5" y="6.5" width="13.2" height="13.2" fill="url(#gpb)" stroke="#4a5868" stroke-width="1.2"/><path d="M35 9.2 L42 9.2 M35 11.5 L39 11.5 M35 13.6 L37 13.6" stroke="#5a6a7a" stroke-width="0.9"/><path d="M37.2 16.3 L41.2 12.2 L41.2 14.4 L46.8 14.4 L46.8 18.4 L41.2 18.4 L41.2 20.6 Z" fill="url(#gar)" stroke="#9a5808" stroke-width="1.1" stroke-linejoin="round"/><path d="M53 11.8 L58.4 11.8 L55.7 15.2 Z" fill="#3a4a5a"/><rect x="67.5" y="6.5" width="13.2" height="13.2" fill="#c8cacc" stroke="#9a9c9e" stroke-width="1.2"/><path d="M71 9.2 L78 9.2 M74 11.5 L78 11.5 M76 13.6 L78 13.6" stroke="#a8aaac" stroke-width="0.9"/><path d="M76 16.3 L72 12.2 L72 14.4 L66 14.4 L66 18.4 L72 18.4 L72 20.6 Z" fill="#d8cab4" stroke="#b8a890" stroke-width="1" stroke-linejoin="round"/><path d="M87.8 11.8 L93.2 11.8 L90.5 15.2 Z" fill="#3a4a5a"/></svg>
<svg style="left:588px;top:106px" width="130" height="26"><defs><linearGradient id="gorr" x1="0" y1="0" x2="0" y2="1"><stop offset="0" stop-color="#fbe0b8"/><stop offset="1" stop-color="#eea858"/></linearGradient><linearGradient id="gblu" x1="0" y1="0" x2="0" y2="1"><stop offset="0" stop-color="#e8f4fe"/><stop offset="1" stop-color="#a8d0f4"/></linearGradient><linearGradient id="ggry" x1="0" y1="0" x2="0" y2="1"><stop offset="0" stop-color="#e8e8e8"/><stop offset="1" stop-color="#a0a0a0"/></linearGradient></defs><rect x="5.5" y="6.5" width="11.5" height="6" fill="url(#gorr)" stroke="#8a4a08" stroke-width="1.1"/><circle cx="13" cy="13" r="4.6" fill="#cfe2f2" stroke="#222" stroke-width="1.5"/><path d="M10.5 12.2 L15.5 12.2" stroke="#9ab0c4" stroke-width="1"/><path d="M16.3 16.3 L20.2 20.2" stroke="#111" stroke-width="2.2" stroke-linecap="round"/><rect x="30.5" y="6.5" width="11.5" height="6" fill="url(#gorr)" stroke="#8a4a08" stroke-width="1.1"/><path d="M33.3 15.6 L38.8 10.6 L38.8 13.5 L45.6 13.5 L45.6 17.7 L38.8 17.7 L38.8 20.6 Z" fill="url(#gblu)" stroke="#0a4a98" stroke-width="1.2" stroke-linejoin="round"/><rect x="59.5" y="6.5" width="11.5" height="6" fill="url(#gorr)" stroke="#8a4a08" stroke-width="1.1"/><path d="M67.8 15.6 L62.3 10.6 L62.3 13.5 L55.5 13.5 L55.5 17.7 L62.3 17.7 L62.3 20.6 Z" fill="url(#gblu)" stroke="#0a4a98" stroke-width="1.2" stroke-linejoin="round"/><rect x="80.5" y="6.5" width="11.5" height="6" fill="url(#gorr)" stroke="#8a4a08" stroke-width="1.1"/><rect x="84.5" y="14.5" width="11" height="6" fill="url(#ggry)" stroke="#333" stroke-width="1.1"/><path d="M80.5 13.5 L83.3 19 M92.8 7.5 L95.5 13" stroke="#444" stroke-width="0.8" stroke-dasharray="1 1"/><rect x="104" y="6" width="1.2" height="1.2" fill="#111"/><rect x="104" y="16" width="1.2" height="1.2" fill="#111"/><rect x="106" y="6" width="1.2" height="1.2" fill="#111"/><rect x="106" y="16" width="1.2" height="1.2" fill="#111"/><rect x="108" y="6" width="1.2" height="1.2" fill="#111"/><rect x="108" y="16" width="1.2" height="1.2" fill="#111"/><rect x="110" y="6" width="1.2" height="1.2" fill="#111"/><rect x="110" y="16" width="1.2" height="1.2" fill="#111"/><rect x="112" y="6" width="1.2" height="1.2" fill="#111"/><rect x="112" y="16" width="1.2" height="1.2" fill="#111"/><rect x="114" y="6" width="1.2" height="1.2" fill="#111"/><rect x="114" y="16" width="1.2" height="1.2" fill="#111"/><rect x="116" y="6" width="1.2" height="1.2" fill="#111"/><rect x="116" y="16" width="1.2" height="1.2" fill="#111"/><rect x="104" y="8" width="1.2" height="1.2" fill="#111"/><rect x="116" y="8" width="1.2" height="1.2" fill="#111"/><rect x="104" y="10" width="1.2" height="1.2" fill="#111"/><rect x="116" y="10" width="1.2" height="1.2" fill="#111"/><rect x="104" y="12" width="1.2" height="1.2" fill="#111"/><rect x="116" y="12" width="1.2" height="1.2" fill="#111"/><rect x="104" y="14" width="1.2" height="1.2" fill="#111"/><rect x="116" y="14" width="1.2" height="1.2" fill="#111"/><path d="M114.3 12.2 L119.8 17.3 L116.6 17.8 L114.2 20.6 Z" fill="#3a5068" stroke="#2a3a4a" stroke-width="0.6"/></svg>
<svg style="left:718px;top:108px" width="74" height="22"><defs><linearGradient id="gor" x1="0" y1="0" x2="0" y2="1"><stop offset="0" stop-color="#fde6c4"/><stop offset="1" stop-color="#f2b060"/></linearGradient><linearGradient id="gbl" x1="0" y1="0" x2="0" y2="1"><stop offset="0" stop-color="#c8f0fa"/><stop offset="1" stop-color="#80d0ec"/></linearGradient><linearGradient id="ggr" x1="0" y1="0" x2="0" y2="1"><stop offset="0" stop-color="#f4f4f4"/><stop offset="1" stop-color="#b8b8b8"/></linearGradient></defs><path d="M10.5 4.5 L17 4.5 L20 7.6 L17 10.7 L10.5 10.7 Z" fill="url(#gbl)" stroke="#3a6e7e" stroke-width="1" stroke-linejoin="round"/><path d="M9.5 6 L15 12 L11.8 12 L11.8 18.6 L7.2 18.6 L7.2 12 L4 12 Z" fill="url(#gor)" stroke="#8a4a08" stroke-width="1.1" stroke-linejoin="round"/><path d="M35.5 12.5 L42 12.5 L45 15.6 L42 18.7 L35.5 18.7 Z" fill="url(#gbl)" stroke="#3a6e7e" stroke-width="1" stroke-linejoin="round"/><path d="M32.2 4.3 L36.8 4.3 L36.8 10.6 L40 10.6 L34.5 16.6 L29 10.6 L32.2 10.6 Z" fill="url(#gor)" stroke="#8a4a08" stroke-width="1.1" stroke-linejoin="round"/><path d="M54.5 4.5 L61 4.5 L64 7.6 L61 10.7 L54.5 10.7 Z" fill="url(#gbl)" stroke="#3a6e7e" stroke-width="1" stroke-linejoin="round"/><path d="M60.5 12.5 L67 12.5 L70 15.6 L67 18.7 L60.5 18.7 Z" fill="url(#ggr)" stroke="#555" stroke-width="1" stroke-linejoin="round"/><path d="M56.3 12 L58.7 16.8" stroke="#333" stroke-width="1" stroke-dasharray="1 1.2"/><rect x="64" y="10" width="1" height="1" fill="#333"/></svg>
<svg style="left:858px;top:112px" width="17" height="17"><defs><radialGradient id="grd" cx="0.45" cy="0.35" r="0.7"><stop offset="0" stop-color="#ffc0c0"/><stop offset="0.6" stop-color="#f26060"/><stop offset="1" stop-color="#d03a3a"/></radialGradient></defs><circle cx="9" cy="8.5" r="6" fill="url(#grd)" stroke="#c84848" stroke-width="0.8"/></svg>
<svg style="left:798px;top:108px" width="50" height="22"><path d="M5 9.4 L10 4.8 L10 7.2 L15.6 7.2 L15.6 11.6 L10 11.6 L10 14 Z" fill="#cfe7fa" stroke="#0a5a90" stroke-width="1.2" stroke-linejoin="round"/><path d="M17.3 6.3 L20.8 6.3" stroke="#2a2a2a" stroke-width="1.1" stroke-dasharray="4 0.6"/><path d="M17.3 8.4 L20.8 8.4" stroke="#2a2a2a" stroke-width="1.1" stroke-dasharray="2.5 0.5"/><path d="M17.3 10.5 L20.8 10.5" stroke="#2a2a2a" stroke-width="1.1" stroke-dasharray="2.5 0.5"/><path d="M17.3 12.5 L20.8 12.5" stroke="#2a2a2a" stroke-width="1.1" stroke-dasharray="2.5 0.5"/><path d="M17.3 14.5 L20.8 14.5" stroke="#2a2a2a" stroke-width="1.1" stroke-dasharray="2.5 0.5"/><path d="M7 16.5 L20.8 16.5" stroke="#2a2a2a" stroke-width="1.3" stroke-dasharray="2.5 0.5"/><path d="M7 18.5 L20.8 18.5" stroke="#2a2a2a" stroke-width="1.3" stroke-dasharray="2.5 0.5"/><path d="M41 9.4 L36 4.8 L36 7.2 L30.4 7.2 L30.4 11.6 L36 11.6 L36 14 Z" fill="#cfe7fa" stroke="#0a5a90" stroke-width="1.2" stroke-linejoin="round"/><path d="M42.3 6.3 L45.8 6.3" stroke="#2a2a2a" stroke-width="1.1" stroke-dasharray="2.5 0.5"/><path d="M42.3 8.4 L45.8 8.4" stroke="#2a2a2a" stroke-width="1.1" stroke-dasharray="2.5 0.5"/><path d="M42.3 10.5 L45.8 10.5" stroke="#2a2a2a" stroke-width="1.1" stroke-dasharray="2.5 0.5"/><path d="M42.3 12.5 L45.8 12.5" stroke="#2a2a2a" stroke-width="1.1" stroke-dasharray="2.5 0.5"/><path d="M42.3 14.5 L45.8 14.5" stroke="#2a2a2a" stroke-width="1.1" stroke-dasharray="2.5 0.5"/><path d="M32 16.5 L45.8 16.5" stroke="#2a2a2a" stroke-width="1.3" stroke-dasharray="2.5 0.5"/><path d="M32 18.5 L45.8 18.5" stroke="#2a2a2a" stroke-width="1.3" stroke-dasharray="2.5 0.5"/></svg>
<svg style="left:905px;top:106px" width="80" height="26"><path d="M12 13.5 Q13.5 8 15.5 8 Q17 8.5 15.5 12.5 Q15 14.5 16.5 14 Q18.5 13 19.5 8" fill="none" stroke="#1a8a10" stroke-width="2.6" stroke-linecap="round"/><path d="M12 13.5 Q13.5 8 15.5 8 Q17 8.5 15.5 12.5 Q15 14.5 16.5 14 Q18.5 13 19.5 8" fill="none" stroke="#b8f890" stroke-width="0.9" stroke-linecap="round"/><path d="M21 10.5 L25 10.5" stroke="#2a2a2a" stroke-width="1.1" stroke-dasharray="4 0.6"/><path d="M21 12.5 L25 12.5" stroke="#2a2a2a" stroke-width="1.1" stroke-dasharray="2.5 0.5"/><path d="M21 14.5 L25 14.5" stroke="#2a2a2a" stroke-width="1.1" stroke-dasharray="2.5 0.5"/><path d="M11 16.4 L25 16.4" stroke="#2a2a2a" stroke-width="1.2" stroke-dasharray="2.5 0.5"/><path d="M11 18.4 L25 18.4" stroke="#2a2a2a" stroke-width="1.2" stroke-dasharray="2.5 0.5"/><path d="M11 20.4 L25 20.4" stroke="#2a2a2a" stroke-width="1.2" stroke-dasharray="2.5 0.5"/><path d="M46.5 10.5 L50 10.5" stroke="#111" stroke-width="1.2" stroke-dasharray="2.5 0.5"/><path d="M46.5 12.5 L50 12.5" stroke="#111" stroke-width="1.2" stroke-dasharray="2.5 0.5"/><path d="M46.5 14.5 L50 14.5" stroke="#111" stroke-width="1.2" stroke-dasharray="2.5 0.5"/><path d="M36 16.4 L50 16.4" stroke="#111" stroke-width="1.3" stroke-dasharray="2.5 0.5"/><path d="M36 18.4 L50 18.4" stroke="#111" stroke-width="1.3" stroke-dasharray="2.5 0.5"/><path d="M36 20.4 L50 20.4" stroke="#111" stroke-width="1.3" stroke-dasharray="2.5 0.5"/><defs><linearGradient id="gcy" x1="0" y1="0" x2="1" y2="0"><stop offset="0" stop-color="#c4c4e4"/><stop offset="0.5" stop-color="#a4a4d0"/><stop offset="1" stop-color="#8a8ac0"/></linearGradient></defs><path d="M61.5 9 L61.5 18.5 Q61.5 20.5 67 20.5 Q72.5 20.5 72.5 18.5 L72.5 9" fill="url(#gcy)" stroke="#6a6a7a" stroke-width="1"/><ellipse cx="67" cy="9" rx="5.5" ry="1.8" fill="#d8d8f0" stroke="#6a6a7a" stroke-width="1"/></svg>
<svg style="left:884px;top:111px" width="17" height="17"><rect x="1.5" y="2.5" width="12" height="12" fill="#c8c8c8" stroke="#6a6a6a"/></svg>
<div class="a" style="left:343px;top:133px;width:1138px;height:560px;background:#fff"></div>
<div class="a" style="left:343px;top:133px;width:53px;height:560px;background:#e9e8e2;border-right:1px solid #b4b4b0"></div>
<div class="a" style="left:418px;top:133px;width:1px;height:560px;background:#707070"></div>
<div class="a" style="left:418px;top:179px;width:9px;height:1px;background:#707070"></div>
<div class="a" style="left:418px;top:210px;width:9px;height:1px;background:#707070"></div>
<div class="a" style="left:418px;top:303px;width:9px;height:1px;background:#707070"></div>
<div class="a" style="left:410px;top:388px;width:17px;height:17px;border:1px solid #707070;background:#fff"></div>
<div class="a" style="left:414px;top:396px;width:9px;height:1px;background:#606060"></div>
<div class="a" style="left:410px;top:636px;width:17px;height:17px;border:1px solid #707070;background:#fff"></div>
<div class="a" style="left:414px;top:644px;width:9px;height:1px;background:#606060"></div>
<div class="a" style="left:440px;top:443px;width:1041px;height:31px;background:#e8eef8"></div>
<div class="a" style="left:1434px;top:474px;width:47px;height:31px;background:#eaea9e"></div>
<div class="a" style="left:1084px;top:536px;width:266px;height:31px;background:#eaea9e"></div>
<div class="a" style="left:1224px;top:660px;width:257px;height:31px;background:#eaea9e"></div>
<div class="ig" style="left:439px;top:133px;height:372px"></div>
<div class="ig" style="left:495px;top:133px;height:155px"></div>
<div class="ig" style="left:551px;top:133px;height:62px"></div>
<div class="ig" style="left:607px;top:133px;height:31px"></div>
<div class="ig" style="left:495px;top:412px;height:93px"></div>
<div class="ig" style="left:439px;top:536px;height:157px"></div>
<div class="ig" style="left:495px;top:536px;height:157px"></div>
<div class="ig" style="left:551px;top:660px;height:33px"></div>
<div class="a" style="left:0;top:0;width:1481px;height:693px;overflow:hidden">
<div class="ln" style="top:133px">270</div>
<div class="code" style="top:133px">                <span class="var">$res</span>[<span class="var">$post</span>-&gt;ID] = <span class="var">$tmp</span>;</div>
<div class="ln" style="top:164px">271</div>
<div class="code" style="top:164px">            }</div>
<div class="ln" style="top:195px">272</div>
<div class="code" style="top:195px">        }</div>
<div class="ln" style="top:226px">273</div>
<div class="code" style="top:226px"></div>
<div class="ln" style="top:257px">274</div>
<div class="code" style="top:257px">        <span class="kw">return</span> <span class="var">$res</span>;</div>
<div class="ln" style="top:288px">275</div>
<div class="code" style="top:288px">    }</div>
<div class="ln" style="top:319px">276</div>
<div class="code" style="top:319px"></div>
<div class="code" style="top:350px">    <span class="kw">public static function</span> <span class="bi">front_script_includer</span>()</div>
<div class="ln" style="top:381px">278</div>
<div class="code" style="top:381px">    {</div>
<div class="ln" style="top:412px">279</div>
<div class="code" style="top:412px">        wp_enqueue_script(<span class="str">&#x27;jquery&#x27;</span>);</div>
<div class="code hlc" style="top:443px">        wp_enqueue_script(<span class="str">&#x27;jquery-ui-datepicker&#x27;</span>, <span class="kw">array</span>(<span class="str">&#x27;jquery&#x27;</span>));</div>
<div class="ln" style="top:474px">281</div>
<div class="code" style="top:474px">        wp_enqueue_style(<span class="str">&#x27;meta_data_filter_front&#x27;</span>, MetaDataFilterCore::<span class="it yel">get_application_uri</span></div>
<div class="ln" style="top:505px">282</div>
<div class="code" style="top:505px"><span class="cm">//tooltipster</span></div>
<div class="ln" style="top:536px">283</div>
<div class="code" style="top:536px">        wp_enqueue_style(<span class="str">&#x27;tooltipster&#x27;</span>, <span class="kw">self</span>::<span class="it yel">get_application_uri</span>() . <span class="str">&#x27;js/tooltipster/css/tooltipster.css&#x27;</span></div>
<div class="ln" style="top:567px">284</div>
<div class="code" style="top:567px">        <span class="var">$tooltip_theme</span> = <span class="kw">self</span>::<span class="it">get_setting</span>(<span class="str">&#x27;tooltip_theme&#x27;</span>);</div>
<div class="ln" style="top:598px">285</div>
<div class="code" style="top:598px">        <span class="kw">if</span> (<span class="var">$tooltip_theme</span> != <span class="str">&#x27;default&#x27;</span>)</div>
<div class="ln" style="top:629px">286</div>
<div class="code" style="top:629px">        {</div>
<div class="ln" style="top:660px">287</div>
<div class="code" style="top:660px">            wp_enqueue_style(<span class="str">&#x27;tooltipster_theme&#x27;</span>, <span class="kw">self</span>::<span class="it yel">get_application_uri</span>()</div>
</div>
<svg style="left:384px;top:361px" width="12" height="11"><path d="M5.5 0.5 L10.8 10.2 L0.2 10.2Z" fill="#f4e020" stroke="#9a8000" stroke-linejoin="round"/><rect x="5" y="3" width="1.2" height="4" fill="#000"/><rect x="5" y="8" width="1.2" height="1.2" fill="#000"/></svg>
<svg style="left:383px;top:453px" width="12" height="14"><path d="M2 9 Q0.8 6.5 1.2 4.5 Q2 1 5.5 1 Q9 1 9.8 4.5 Q10.2 6.5 9 9 Z" fill="#eccb30" stroke="#a8820c" stroke-width="1"/><ellipse cx="5.5" cy="3.6" rx="2.6" ry="1.5" fill="#fff6c8"/><rect x="3" y="9.5" width="5" height="3" rx="1" fill="#d8dce0" stroke="#38506c" stroke-width="1"/></svg>
<div class="a" style="left:818px;top:378px;width:294px;height:1px;background:repeating-linear-gradient(90deg,#f2e418 0 2px,transparent 2px 4px)"></div>
<div class="a" style="left:818px;top:379px;width:294px;height:1px;background:repeating-linear-gradient(90deg,transparent 0 2px,#f2e418 2px 4px)"></div>
<svg style="left:0;top:0" width="1481" height="721"><path d="M1277.5 336 L1131 428.5" stroke="#d80c0c" stroke-width="2.1"/><path d="M1124.8 433 L1130.4 423.4 L1136.4 433Z" fill="#d80c0c"/></svg>
<div class="a" style="left:0;top:693px;width:1481px;height:28px;background:#404040"></div>
<div class="t" style="left:10px;top:700px;font-size:13px;color:#ececec;letter-spacing:0.6px;-webkit-text-stroke:0.25px #404040">PluginUs.NET</div>
</body></html>
